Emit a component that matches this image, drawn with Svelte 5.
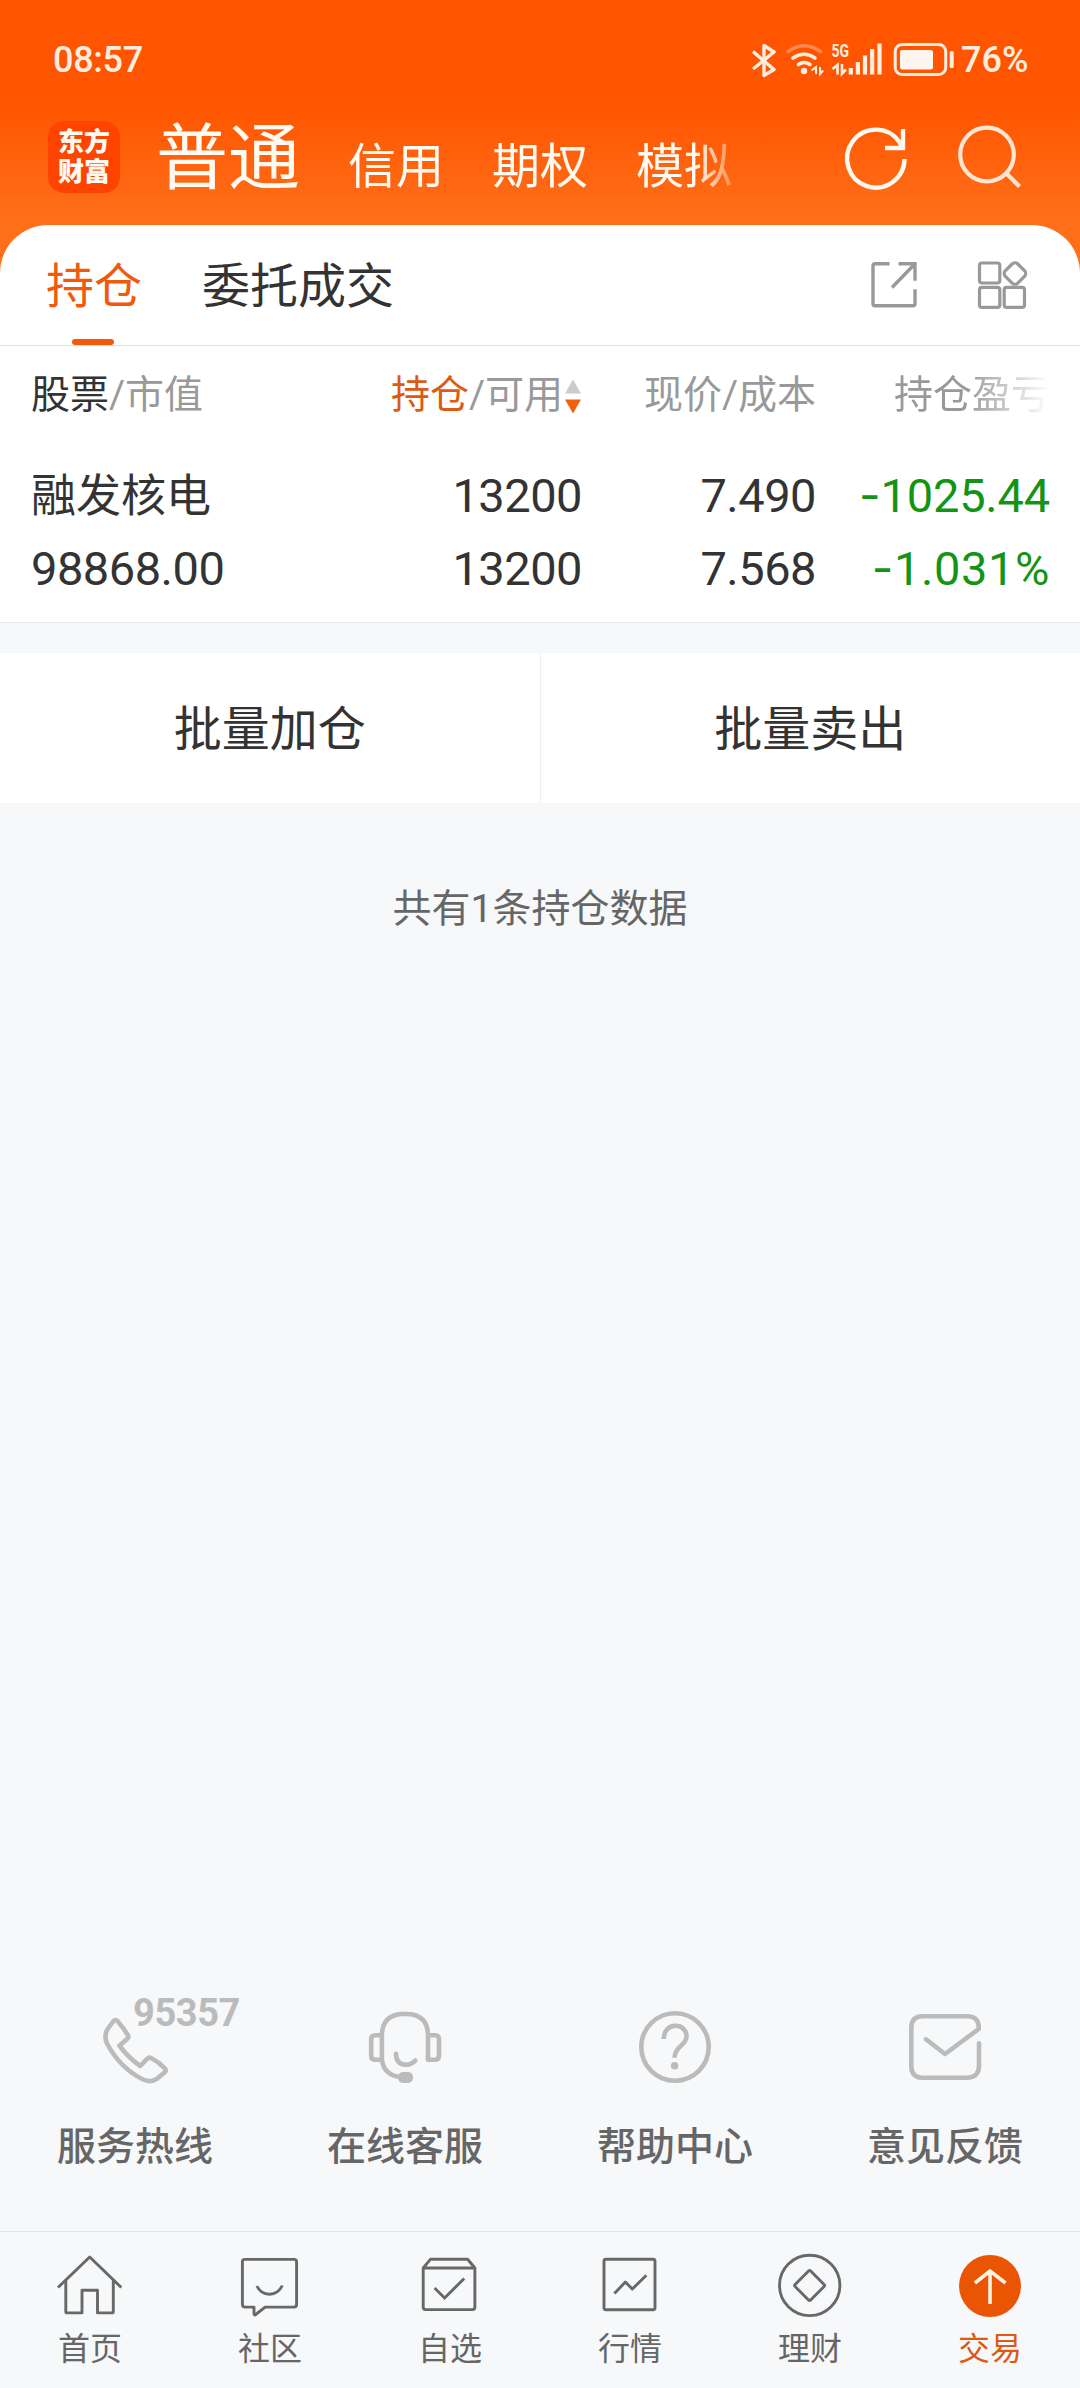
<script lang="ts">
  const accounts = ['信用', '期权', '模拟'];

  const position = {
    name: '融发核电',
    marketValue: '98868.00',
    held: '13200',
    available: '13200',
    price: '7.490',
    cost: '7.568',
    profit: '1025.44',
    profitRate: '1.031%',
  };

  const services = [
    { id: 'phone', label: '服务热线' },
    { id: 'headset', label: '在线客服' },
    { id: 'help', label: '帮助中心' },
    { id: 'mail', label: '意见反馈' },
  ];

  const navItems = [
    { id: 'home', label: '首页' },
    { id: 'chat', label: '社区' },
    { id: 'box', label: '自选' },
    { id: 'chart', label: '行情' },
    { id: 'money', label: '理财' },
    { id: 'trade', label: '交易' },
  ];

  let activeNav = $state('trade');
</script>

<div class="app">
  <header class="header">
    <div class="status">
      <span class="time">08:57</span>
      <svg class="status-icons" width="204" height="40" viewBox="752 40 204 40" fill="none" stroke="#ffeee0">
        <path d="M753 51.5L774 69.5L764 75.5V45.500L774 52L753 69" stroke-width="3.4" stroke-linejoin="round" />
        <g stroke-width="3.6" stroke-linecap="round">
          <path d="M788 51.500Q804 40 820.500 51.500" opacity="0.35" />
          <path d="M793 58Q804 50.500 815 58" />
          <path d="M798.500 64.500Q804 60.500 810 64.500" />
        </g>
        <circle cx="804" cy="71" r="3.2" fill="#ffeee0" stroke="none" />
        <path d="M811.500 70.500L816 67V74M820 67V74L823 70.500" stroke-width="2" />
        <text x="831.500" y="57" class="network" textLength="17.500" lengthAdjust="spacingAndGlyphs">5G</text>
        <path d="M832.500 69L837.500 65V74.500M842 64V73.500L846 69.500" stroke-width="2.6" />
        <path d="M850.800 68V74.500M857.900 62V74.500M865 55.500V74.500M872.200 49V74.500M879.500 43.500V74.500" stroke-width="4.2" />
        <rect x="895.200" y="44.500" width="50.500" height="30" rx="7" stroke-width="3" />
        <rect x="900" y="50" width="33" height="19.500" rx="2.500" fill="#fff5ef" stroke="none" />
        <rect x="949.700" y="51" width="4" height="17" rx="1.500" fill="#ffeee0" stroke="none" />
      </svg>
      <span class="battery">76%</span>
    </div>

    <div class="account-bar">
      <div class="logo"><span>东方</span><span>财富</span></div>
      <nav class="accounts">
        <span class="current">普通</span>
        {#each accounts as account}
          <span>{account}</span>
        {/each}
      </nav>
      <svg class="refresh" width="68" height="68" viewBox="0 0 68 68" fill="none" stroke="#fff8ee" stroke-width="4.4">
        <path d="M62.500 35A28.700 29 0 1 1 57 17.500L61 24" />
        <path d="M61 5V24H43" />
      </svg>
      <svg class="search" width="68" height="68" viewBox="0 0 68 68" fill="none" stroke="#ffe6d2" stroke-width="4.200">
        <circle cx="31" cy="30.500" r="26.800" />
        <path d="M50 49L63.500 62.500" />
      </svg>
    </div>
  </header>

  <main class="panel">
    <div class="tabs">
      <button type="button" class="tab active">持仓</button>
      <button type="button" class="tab">委托成交</button>
      <svg class="share" width="48" height="48" viewBox="0 0 48 48" fill="none" stroke="#999" stroke-width="3.400">
        <path d="M19.500 2.700H5Q3 2.700 3 4.700V42.700Q3 44.700 5 44.700H43Q45 44.700 45 42.700V28.300" />
        <path d="M28.500 2.700H45V19.700M45 2.700L22 26.500" />
      </svg>
      <svg width="50" height="50" viewBox="0 0 50 50" fill="none" stroke="#999" stroke-width="3.200">
        <rect x="2.500" y="3" width="20.300" height="20" rx="2.500" />
        <rect x="2.500" y="27.400" width="20.300" height="20" rx="2.500" />
        <rect x="27.200" y="27.400" width="20.300" height="20" rx="2.500" />
        <rect x="29.200" y="4.800" width="17.500" height="17.500" rx="4" transform="rotate(45 37.950 13.550)" />
      </svg>
    </div>

    <div class="grid table-head">
      <span><b>股票</b>/市值</span>
      <span class="sorted">
        <b>持仓</b>/可用
        <svg width="16" height="36" viewBox="0 0 16 36">
          <path d="M8 0.500L16 14.500H0Z" fill="#ccc" />
          <path d="M0 20.500H16L8 34.500Z" fill="#f0600f" />
        </svg>
      </span>
      <span>现价/成本</span>
      <span class="fading">持仓盈亏</span>
    </div>

    <div class="grid position">
      <div class="name">{position.name}</div>
      <div>{position.held}</div>
      <div>{position.price}</div>
      <div class="loss"><i>-</i>{position.profit}</div>
      <div>{position.marketValue}</div>
      <div>{position.available}</div>
      <div>{position.cost}</div>
      <div class="loss rate"><i>-</i>{position.profitRate}</div>
    </div>
  </main>

  <div class="actions">
    <button type="button">批量加仓</button>
    <button type="button">批量卖出</button>
  </div>

  <p class="summary">共有1条持仓数据</p>

  <section class="services">
    {#each services as service}
      <div class="service">
        <svg width="72" height="72" viewBox="0 0 72 72" fill="none" stroke="#bbb" stroke-width="4.600" stroke-linejoin="round">
          {#if service.id === 'phone'}
            <path d="M14.500 10Q16.700 8 18.500 10Q25 17.500 29 24.500Q30 26.300 28.500 27.500L20.500 34.700Q29 46.500 41.200 55L48.500 47.500Q50 46 52 47Q60 51 66 57.500Q67.500 59.300 66 61L58 67.800Q51.500 72 44 68.500Q21 57 8 32.500Q4.500 24.500 9 17.500Z" />
          {:else if service.id === 'headset'}
            <path d="M12.900 49V24Q13.500 4 33 3H39Q58.500 4 59 24V48.700H66Q70 48.700 70 44.700V28Q70 24.300 66 24.300H59" />
            <path d="M12.900 24.300H6.500Q2.200 24.300 2.200 28V44.700Q2.200 48.700 6.500 48.700H12.900Q15 64 31 66" />
            <path d="M27 42.700Q27 53 36.500 53.800Q42.500 54 46.300 49.500" stroke-linecap="round" />
            <rect x="29" y="61" width="15" height="11" rx="5" fill="#bbb" stroke="none" />
          {:else if service.id === 'help'}
            <circle cx="36" cy="36" r="33.700" />
            <path d="M24.700 28C24.700 10.500 48 11 47.500 26C47.200 34 35.500 36 35.500 46.700" />
            <circle cx="35.600" cy="54.700" r="3.800" fill="#bbb" stroke="none" />
          {:else}
            <path d="M70 32.300V55.500Q69.500 66.300 59 66.700H13Q2.500 66.300 2.300 55.500V16.500Q2.500 5.700 13 5.300H59Q70.500 6 69.700 18L36 43L17 28.300" stroke-linecap="round" />
          {/if}
        </svg>
        {#if service.id === 'phone'}
          <span class="hotline">95357</span>
        {/if}
        <span class="service-label">{service.label}</span>
      </div>
    {/each}
  </section>

  <nav class="bottom-nav">
    {#each navItems as item}
      <button type="button" class="nav-item" class:active={activeNav === item.id} onclick={() => (activeNav = item.id)}>
        <svg width="72" height="72" viewBox="0 0 72 72" fill="none" stroke="#686868" stroke-width="2.900" stroke-linejoin="round">
          {#if item.id === 'home'}
            <path d="M4 37.500L35.700 7L67.300 37.500" />
            <path d="M11.800 30V61.500Q11.800 62.900 13.300 62.900H28V40.300H43.500V62.900H57.800Q59.300 62.900 59.300 61.500V30" />
          {:else if item.id === 'chat'}
            <path d="M11 9.400H60Q62.600 9.400 62.600 12V54.500Q62.600 57.100 60 57.100H31.200L21 65Q20 65 20 64V57.100H11Q8.400 57.100 8.400 54.500V12Q8.400 9.400 11 9.400Z" />
            <path d="M22.900 36C28 47 43 47 48.300 35.500" />
          {:else if item.id === 'box'}
            <path d="M9.200 18L16.400 9.300H53.600L60.900 18V57Q60.900 59.600 58.500 59.600H11.600Q9.200 59.600 9.200 57ZM9.200 18H60.900" />
            <path d="M20.600 38L30.600 48L50.200 28.500" stroke-linejoin="miter" />
          {:else if item.id === 'chart'}
            <rect x="10" y="9.200" width="51" height="50.500" rx="2" />
            <path d="M20.400 43.500L31.400 32L38.300 39L52.400 25.200" />
          {:else if item.id === 'money'}
            <circle cx="35.700" cy="35.400" r="30.200" />
            <rect x="24.600" y="24.500" width="22" height="22" rx="1.500" transform="rotate(45 35.600 35.500)" />
          {:else}
            <circle cx="36" cy="36" r="31" fill="#ea5504" stroke="none" />
            <path d="M20.900 33L36 21L51.500 33M36 20.500V54" stroke="#fff2df" stroke-width="3.600" stroke-linejoin="miter" />
          {/if}
        </svg>
        <span>{item.label}</span>
      </button>
    {/each}
  </nav>
</div>

<style>
  :global(body) {
    margin: 0;
    background: #f6f8fa;
  }

  .app {
    display: flex;
    flex-direction: column;
    width: 1080px;
    height: 2388px;
    overflow: hidden;
    background: #f6f8fa;
    color: #333;
    font-family: Roboto, 'Noto Sans CJK SC', sans-serif;
  }

  button {
    padding: 0;
    border: none;
    background: none;
    color: inherit;
    font: inherit;
  }

  svg {
    display: block;
    flex: none;
    overflow: visible;
  }

  .header {
    box-sizing: border-box;
    height: 285px;
    margin-bottom: -60px;
    flex: none;
    background: linear-gradient(#ff5500 105px, #ff6e19 215px);
    color: #fffaf2;
  }

  .status {
    display: flex;
    align-items: center;
    height: 120px;
    padding: 0 48px 0 53px;
    box-sizing: border-box;
    color: #ffeee0;
    font-size: 36px;
    font-weight: 500;
  }

  .time {
    letter-spacing: -0.3px;
  }

  .status-icons {
    margin-left: auto;
  }

  .network {
    fill: #ffeee0;
    stroke: none;
    font-size: 18px;
    font-weight: 700;
  }

  .battery {
    width: 71px;
    margin-left: 5px;
  }

  .account-bar {
    display: flex;
    height: 74px;
    padding: 0 56px 0 48px;
  }

  .logo {
    display: flex;
    flex-direction: column;
    align-items: center;
    justify-content: center;
    width: 72px;
    height: 72px;
    margin-top: 1px;
    border-radius: 16px;
    background: #ff4400;
    font-size: 26px;
    font-weight: 900;
    line-height: 30px;
  }

  .accounts {
    display: flex;
    align-items: baseline;
    gap: 48px;
    height: 84px;
    margin: 2px 0 0 36px;
    font-size: 48px;
    line-height: 74px;
    white-space: nowrap;
    mask-image: linear-gradient(to right, #000 540px, transparent 590px);
  }

  .accounts .current {
    font-size: 72px;
  }

  .refresh {
    margin: 4px 0 0 auto;
  }

  .search {
    margin: 4px 0 0 46px;
  }

  .panel {
    height: 397px;
    flex: none;
    border-bottom: 1px solid #e9ebed;
    border-radius: 48px 48px 0 0;
    background: #fff;
  }

  .tabs {
    display: flex;
    align-items: center;
    height: 120px;
    padding: 0 53px 0 46px;
    border-bottom: 1px solid #ddd;
    font-size: 48px;
  }

  .tab {
    position: relative;
    height: 120px;
    margin-right: 60px;
    padding-bottom: 7px;
  }

  .tab.active {
    color: #f05a0c;
  }

  .tab.active::after {
    content: '';
    position: absolute;
    bottom: 0;
    left: 26px;
    width: 42px;
    height: 6px;
    border-radius: 3px;
    background: #f2590d;
  }

  .share {
    margin: 0 59px 0 auto;
  }

  .grid {
    display: grid;
    grid-template-columns: 300px 251px 234px 234px;
    padding: 0 30px 0 31px;
    text-align: right;
  }

  .grid > :nth-child(4n + 1) {
    text-align: left;
  }

  .table-head {
    height: 98px;
    line-height: 98px;
    color: #999;
    font-size: 39px;
  }

  .table-head b {
    color: #333;
    font-weight: 400;
  }

  .table-head .sorted {
    display: flex;
    align-items: center;
    justify-content: flex-end;
  }

  .table-head .sorted b {
    color: #dc5a14;
  }

  .sorted svg {
    margin: 4px 1px 0 2px;
  }

  .fading {
    mask-image: linear-gradient(to right, #000 150px, transparent 234px);
  }

  .position {
    margin-top: 15px;
    font-size: 47px;
    line-height: 73px;
    letter-spacing: -0.5px;
  }

  .position .name {
    padding-top: 2px;
    font-size: 45px;
    line-height: 71px;
    letter-spacing: 0;
  }

  .loss {
    color: #149414;
    letter-spacing: -0.2px;
  }

  .loss.rate {
    letter-spacing: 0.6px;
  }

  .loss i {
    font-family: Inter, sans-serif;
    font-style: normal;
    line-height: 0;
  }

  .actions {
    display: flex;
    height: 150px;
    margin-top: 30px;
    flex: none;
    background: #fff;
  }

  .actions button {
    flex: 1;
    padding-bottom: 7px;
    font-size: 48px;
  }

  .actions button + button {
    border-left: 1px solid #eceef0;
  }

  .summary {
    margin: 76px 0 0;
    color: #666;
    font-size: 39px;
    line-height: 60px;
    text-align: center;
  }

  .services {
    display: grid;
    grid-template-columns: repeat(4, 1fr);
    margin-top: auto;
    height: 220px;
  }

  .service {
    display: flex;
    flex-direction: column;
    align-items: center;
    position: relative;
  }

  .hotline {
    position: absolute;
    top: -16px;
    left: 133px;
    color: #bbb;
    font-size: 38px;
    font-weight: 700;
    line-height: 36px;
    letter-spacing: -0.4px;
  }

  .service-label {
    margin-top: 35px;
    color: #666;
    font-size: 39px;
    font-weight: 500;
    line-height: 58px;
  }

  .bottom-nav {
    display: grid;
    grid-template-columns: repeat(6, 1fr);
    height: 156px;
    flex: none;
    border-top: 1px solid #e2e3e5;
    background: #f7f8fa;
  }

  .nav-item {
    display: flex;
    flex-direction: column;
    align-items: center;
    padding-top: 18px;
    color: #666;
    font-size: 32px;
    line-height: 48px;
  }

  .nav-item span {
    margin-top: 3px;
  }

  .nav-item.active {
    color: #dc5a14;
  }
</style>
